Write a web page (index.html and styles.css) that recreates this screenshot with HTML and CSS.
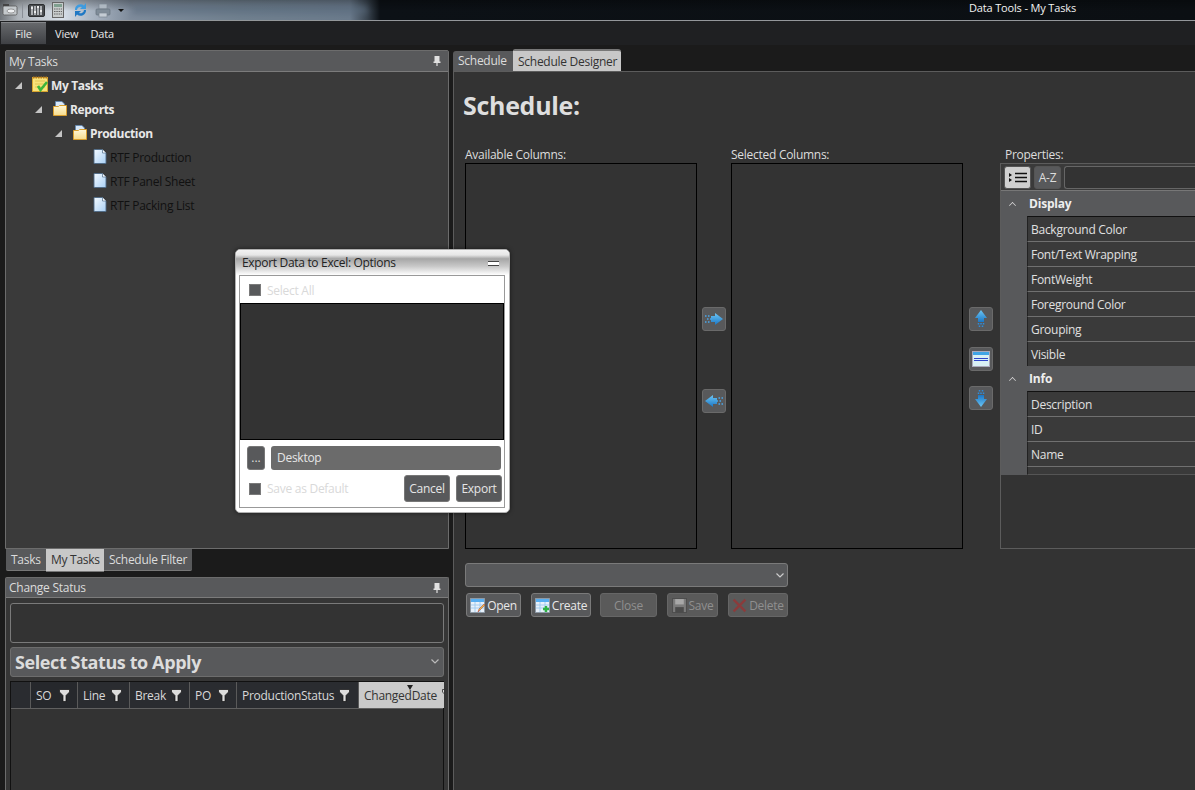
FILE: index.html
```html
<!DOCTYPE html>
<html lang="en">
<head>
<meta charset="utf-8">
<title>Data Tools - My Tasks</title>
<link rel="stylesheet" href="styles.css">
</head>
<body>
<svg class="defs" width="0" height="0" aria-hidden="true">
  <defs>
    <linearGradient id="blueArrow" x1="0" y1="0" x2="0" y2="1"><stop offset="0" stop-color="#6cc6f5"/><stop offset="1" stop-color="#1b76c4"/></linearGradient>
    <linearGradient id="folder" x1="0" y1="0" x2="0" y2="1"><stop offset="0" stop-color="#fff8d8"/><stop offset="1" stop-color="#f6dc8c"/></linearGradient>
    <linearGradient id="doc" x1="0" y1="0" x2="1" y2="1"><stop offset="0" stop-color="#f4faff"/><stop offset="1" stop-color="#a9d0f5"/></linearGradient>
    <symbol id="i-folder" viewBox="0 0 14 15">
      <path d="M2.500 .5h6.500l2.500 2.500v5h-9z" fill="#d9e8f8" stroke="#5f86b3" stroke-width=".8"/>
      <path d="M.5 5.500h5l1-1h7v10h-13z" fill="url(#folder)" stroke="#d99f2e" stroke-width="1"/>
    </symbol>
    <symbol id="i-doc" viewBox="0 0 14 15">
      <path d="M1 .5h8.500l3.500 3.500v10.500H1z" fill="url(#doc)" stroke="#4e6a86" stroke-width=".9"/>
      <path d="M9.500.5v3.500H13" fill="#fff" stroke="#4e6a86" stroke-width=".7"/>
    </symbol>
    <symbol id="i-filter" viewBox="0 0 11 13">
      <path d="M.5 .5h10v2.500L7 6.500v6H4v-6L.5 3z" fill="#ddd" stroke="#111" stroke-width=".7"/>
    </symbol>
    <symbol id="i-pin" viewBox="0 0 8 10">
      <path d="M1.500 0h5v5.500h1V7H4.600v3H3.400V7H.5V5.500h1z" fill="#e0e0e0"/>
    </symbol>
    <symbol id="i-table" viewBox="0 0 15 15">
      <rect x=".5" y=".5" width="14" height="14" fill="#e8f1fa" stroke="#8a98a6" stroke-width=".8"/>
      <rect x="1" y="1" width="13" height="3" fill="#58aef0"/>
      <path d="M1 7h13M1 10h13M5 4v10M10 4v10" stroke="#9cc9ef" stroke-width=".9"/>
    </symbol>
    <symbol id="i-right" viewBox="0 0 20 14">
      <path d="M7 4h4V1l8 6-8 6v-3H7z" fill="url(#blueArrow)"/>
      <path d="M1 4h1.500M4 4h1.500M3 7h1.500M6 7h1.500M1 10h1.500M4 10h1.500" stroke="#4aa7ea" stroke-width="1.500"/>
    </symbol>
    <symbol id="i-up" viewBox="0 0 14 20">
      <path d="M7 1l6 8h-3v4H4V9H1z" fill="url(#blueArrow)"/>
      <path d="M4.500 14v1.500M7 14v1.500M9.500 14v1.500M5.500 16.500V18M8.500 16.500V18" stroke="#2e8ddb" stroke-width="1.500"/>
    </symbol>
  </defs>
</svg>

<div class="window">
  <header class="titlebar">
    <div class="quick">
      <svg class="qa qa-app" viewBox="0 0 16 14"><rect x="1" y="3" width="14" height="9" rx="1.500" fill="#c4c9cc" stroke="#555" stroke-width=".8"/><rect x="1" y="1" width="6" height="2" fill="#444"/><ellipse cx="9" cy="8" rx="4" ry="2" fill="#eef0f2" stroke="#777" stroke-width=".7"/></svg>
      <span class="qa-sep"></span>
      <svg class="qa qa-mix" viewBox="0 0 17 13"><rect x=".5" y=".5" width="16" height="12" rx="1.500" fill="#4a4d50" stroke="#2c2e30"/><path d="M4 2v9M7 2v9M10 2v9M13 2v9" stroke="#d8dade" stroke-width="1.400"/><path d="M3 4h2M6 8h2M9 3h2M12 7h2" stroke="#fff" stroke-width="1.600"/></svg>
      <svg class="qa qa-calc" viewBox="0 0 12 16"><rect x=".5" y=".5" width="11" height="15" fill="#c8cccc" stroke="#666"/><rect x="2" y="2" width="8" height="3" fill="#7f9f8f"/><path d="M2 7h8M2 9.500h8M2 12h8" stroke="#666" stroke-width="1.200" stroke-dasharray="1.500 .8"/></svg>
      <svg class="qa qa-sync" viewBox="0 0 15 16"><path d="M2 8a5.500 5.500 0 0 1 9-4.500L13 1v6H7l2-2A3.500 3.500 0 0 0 4 8z" fill="#3d9be0"/><path d="M13 8a5.500 5.500 0 0 1-9 4.500L2 15V9h6l-2 2a3.500 3.500 0 0 0 5-3z" fill="#1f78c4"/></svg>
      <svg class="qa qa-print" viewBox="0 0 16 15"><rect x="4" y="1" width="8" height="5" fill="#aeb8c2" stroke="#7b8692" stroke-width=".7"/><rect x="1" y="6" width="14" height="6" rx="1" fill="#7f8c98" stroke="#66717c" stroke-width=".7"/><rect x="4" y="10" width="8" height="4" fill="#c4ccd4" stroke="#7b8692" stroke-width=".7"/></svg>
      <span class="qa-more"></span>
    </div>
    <div class="smear"></div>
    <div class="app-title">Data Tools - My Tasks</div>
  </header>

  <nav class="menubar">
    <span class="menu-file">File</span>
    <span class="menu-item">View</span>
    <span class="menu-item">Data</span>
  </nav>

  <main class="workspace">
    <section class="left">
      <div class="panel tasks-panel">
        <div class="panel-head"><span>My Tasks</span><svg class="pin"><use href="#i-pin"/></svg></div>
        <div class="tree">
          <div class="tree-row"><span class="twist"></span><svg class="tree-notes" viewBox="0 0 16 16"><rect x=".5" y="1.500" width="15" height="14" fill="#f8e27a" stroke="#d9a52f"/><path d="M1 1.500h14" stroke="#b07a20" stroke-width="2" stroke-dasharray="1.500 1"/><path d="M3 5h10M3 8h10M3 11h10" stroke="#dcbc48" stroke-width=".8"/><path d="M6 10l2.500 4L15 6" fill="none" stroke="#3cb53a" stroke-width="2.600"/></svg><b>My Tasks</b></div>
          <div class="tree-row lvl1"><span class="twist"></span><svg class="tree-icon"><use href="#i-folder"/></svg><b>Reports</b></div>
          <div class="tree-row lvl2"><span class="twist"></span><svg class="tree-icon"><use href="#i-folder"/></svg><b>Production</b></div>
          <div class="tree-row lvl3"><svg class="tree-icon"><use href="#i-doc"/></svg><span class="leaf">RTF Production</span></div>
          <div class="tree-row lvl3"><svg class="tree-icon"><use href="#i-doc"/></svg><span class="leaf">RTF Panel Sheet</span></div>
          <div class="tree-row lvl3"><svg class="tree-icon"><use href="#i-doc"/></svg><span class="leaf">RTF Packing List</span></div>
        </div>
      </div>
      <div class="bottom-tabs">
        <span class="btab btab-tasks">Tasks</span>
        <span class="btab btab-on">My Tasks</span>
        <span class="btab btab-filter">Schedule Filter</span>
      </div>
      <div class="panel status-panel">
        <div class="panel-head"><span>Change Status</span><svg class="pin"><use href="#i-pin"/></svg></div>
        <div class="status-body">
          <div class="notes-box"></div>
          <div class="status-combo"><span>Select Status to Apply</span><svg class="chev" viewBox="0 0 8 5"><path d="M.5 .5L4 4l3.500-3.500" fill="none" stroke="#bbb" stroke-width="1.200"/></svg></div>
          <div class="grid-box">
            <div class="grid-head">
              <span class="col col-0"></span>
              <span class="col col-so">SO<svg class="filter"><use href="#i-filter"/></svg></span>
              <span class="col col-line">Line<svg class="filter"><use href="#i-filter"/></svg></span>
              <span class="col col-break">Break<svg class="filter"><use href="#i-filter"/></svg></span>
              <span class="col col-po">PO<svg class="filter"><use href="#i-filter"/></svg></span>
              <span class="col col-status">ProductionStatus<svg class="filter"><use href="#i-filter"/></svg></span>
              <span class="col col-date">ChangedDate<i class="sort-mark"></i><svg class="filter date-filter"><use href="#i-filter"/></svg></span>
            </div>
          </div>
        </div>
      </div>
    </section>

    <section class="right">
      <div class="top-tabs">
        <span class="ttab">Schedule</span>
        <span class="ttab ttab-on">Schedule Designer</span>
      </div>
      <div class="designer">
        <h1 class="heading">Schedule:</h1>
        <div class="columns">
          <div class="list-col">
            <label class="col-label">Available Columns:</label>
            <div class="listbox"></div>
          </div>
          <div class="move-col">
            <button class="icon-btn"><svg class="ico-h"><use href="#i-right"/></svg></button>
            <button class="icon-btn"><svg class="ico-h flip-h"><use href="#i-right"/></svg></button>
          </div>
          <div class="list-col">
            <label class="col-label">Selected Columns:</label>
            <div class="listbox"></div>
          </div>
          <div class="order-col">
            <button class="icon-btn"><svg class="ico-v"><use href="#i-up"/></svg></button>
            <button class="icon-btn"><svg class="ico-grid" viewBox="0 0 18 16"><rect x=".5" y=".5" width="17" height="15" fill="#d8f0f4" stroke="#aab"/><rect x="1" y="1" width="16" height="3" fill="#3fa5e6"/><path d="M2 7.500h14M2 9.500h14" stroke="#2d45c8" stroke-width="1.200"/></svg></button>
            <button class="icon-btn"><svg class="ico-v flip-v"><use href="#i-up"/></svg></button>
          </div>
          <div class="props-col">
            <label class="col-label">Properties:</label>
            <div class="props">
              <div class="props-bar">
                <span class="mode mode-on"><svg class="mode-ico" viewBox="0 0 18 11"><path d="M0 1l3 2-3 2zM0 6l3 2-3 2z" fill="#111"/><path d="M6 1.500h12M6 5.500h12M6 9.500h12" stroke="#111" stroke-width="1.300"/></svg></span>
                <span class="mode">A-Z</span>
                <span class="search"></span>
              </div>
              <div class="props-group"><i class="caret"></i><b>Display</b></div>
              <div class="props-rows">
                <div class="prop">Background Color</div>
                <div class="prop">Font/Text Wrapping</div>
                <div class="prop">FontWeight</div>
                <div class="prop">Foreground Color</div>
                <div class="prop">Grouping</div>
                <div class="prop">Visible</div>
              </div>
              <div class="props-group"><i class="caret"></i><b>Info</b></div>
              <div class="props-rows props-end">
                <div class="prop">Description</div>
                <div class="prop">ID</div>
                <div class="prop">Name</div>
                <div class="prop prop-cut"></div>
              </div>
            </div>
          </div>
        </div>
        <div class="schedule-combo"><svg class="chev" viewBox="0 0 8 5"><path d="M.5 .5L4 4l3.500-3.500" fill="none" stroke="#ccc" stroke-width="1.200"/></svg></div>
        <div class="actions">
          <button class="act act-open"><svg class="act-ico" viewBox="0 0 15 15"><use href="#i-table"/><path d="M8 14l1-3 5-5 1 1-5 5z" fill="#f0c040" stroke="#a33" stroke-width=".5"/></svg>Open</button>
          <button class="act act-create"><svg class="act-ico" viewBox="0 0 15 15"><use href="#i-table"/><path d="M11 8v6M8 11h6" stroke="#2fb344" stroke-width="2.400"/></svg>Create</button>
          <button class="act act-close off">Close</button>
          <button class="act act-save off"><svg class="act-ico" viewBox="0 0 14 14"><path d="M.5 .5h13v13H.5z" fill="#7c7c7c" stroke="#4e4e4e"/><rect x="3" y="1" width="8" height="5" fill="#a8a8a8"/><rect x="3" y="8.500" width="8" height="5" fill="#4b4b4b"/></svg>Save</button>
          <button class="act act-delete off"><svg class="act-ico" viewBox="0 0 14 14"><path d="M1.500 1.500l11 11M12.500 1.500l-11 11" stroke="#8a3c3c" stroke-width="2.200"/></svg>Delete</button>
        </div>
      </div>
    </section>
  </main>

  <div class="dialog">
    <div class="dialog-title"><span>Export Data to Excel: Options</span><i class="min"></i></div>
    <div class="dialog-body">
      <div class="check-row"><i class="check"></i><span>Select All</span></div>
      <div class="dialog-list"></div>
      <div class="path-row"><button class="dots">...</button><span class="path">Desktop</span></div>
      <div class="dialog-foot">
        <i class="check"></i><span class="save-default">Save as Default</span>
        <button class="dlg-btn btn-cancel">Cancel</button>
        <button class="dlg-btn">Export</button>
      </div>
    </div>
  </div>
</div>
</body>
</html>
```
FILE: styles.css
```css
* { box-sizing: border-box; }
html, body { margin: 0; padding: 0; height: 100%; overflow: hidden; }
body { background: #1b1b1b; font-family: "Open Sans", "Noto Sans", sans-serif; font-size: 12px; color: #ddd; letter-spacing: -.27px; }
.defs { position: absolute; }
.window { width: 1195px; height: 790px; position: relative; overflow: hidden; display: flex; flex-direction: column; }

.titlebar { height: 21px; flex: none; display: flex; align-items: center; border-bottom: 1px solid #94979b; background: linear-gradient(rgba(0,0,0,.3), rgba(0,0,0,0) 55%), linear-gradient(90deg, #6f7479 0, #aeb4ba 18px, #d8e0e9 62px, #aeb9c6 88px, #7f8c9c 130px, #71818f 240px, #6b7b8c 350px, #3a4550 367px, #0c1116 380px, #0b0f13 100%); position: relative; }
.quick { display: flex; align-items: center; height: 20px; flex: none; position: relative; z-index: 1; }
.qa { display: block; flex: none; }
.qa-app { width: 16px; height: 14px; margin-left: 2px; }
.qa-sep { width: 1px; height: 16px; background: #8a8f96; margin: 0 4px; }
.qa-mix { width: 17px; height: 13px; margin-left: 1px; }
.qa-calc { width: 12px; height: 16px; margin-left: 7px; }
.qa-sync { width: 15px; height: 16px; margin-left: 9px; }
.qa-print { width: 16px; height: 15px; margin-left: 7px; }
.qa-more { width: 0; height: 0; margin-left: 7px; border: 3px solid transparent; border-top: 3px solid #111; margin-top: 4px; }
.smear { width: 235px; height: 8px; margin-left: 8px; flex: none; background: #56677a; filter: blur(3px); opacity: .6; }
.app-title { margin-left: auto; margin-right: 119px; color: #f2f2f2; font-size: 11px; letter-spacing: -.15px; margin-top: -6px; }

.menubar { height: 24px; flex: none; background: #1f2022; display: flex; align-items: center; padding-left: 1px; font-size: 11px; letter-spacing: -.15px; }
.menu-file { width: 45px; height: 22px; text-align: center; line-height: 21px; background: linear-gradient(#66686b, #3f4145); border-top: 1px solid #85878a; color: #e6e6e6; margin-right: 8px; align-self: flex-end; margin-bottom: 1px; }
.menu-item { margin-right: 11px; margin-left: 1px; color: #e8e8e8; }

.workspace { flex: 1; min-height: 0; display: flex; padding-left: 5px; gap: 4px; }
.left { width: 444px; flex: none; padding-top: 5px; display: flex; flex-direction: column; }
.panel { border: 1px solid #6c6c6c; background: #3a3a3a; border-radius: 2px 2px 0 0; }
.panel-head { height: 21px; background: #58595b; border-bottom: 1px solid #7b7b7b; display: flex; align-items: center; justify-content: space-between; padding: 0 7px 0 3px; color: #dcdcdc; }
.pin { width: 8px; height: 10px; flex: none; }
.tasks-panel { height: 499px; flex: none; }
.tree { padding-top: 1px; }
.tree-row { height: 24px; display: flex; align-items: center; padding-left: 9px; color: #e8e8e8; }
.tree-row b { font-weight: 700; letter-spacing: -.35px; }
.lvl1 { padding-left: 29px; }
.lvl2 { padding-left: 49px; }
.lvl3 { padding-left: 87px; }
.twist { width: 0; height: 0; border-style: solid; border-width: 0 0 7px 7px; border-color: transparent transparent #c4c4c4 transparent; flex: none; margin-right: 10px; }
.tree-notes { width: 16px; height: 16px; flex: none; margin-right: 3px; margin-top: -2px; }
.tree-icon { width: 14px; height: 15px; flex: none; margin-right: 3px; margin-top: -2px; }
.leaf { color: #111; }
.lvl1 .twist, .lvl2 .twist { margin-right: 11px; }

.bottom-tabs { height: 23px; flex: none; display: flex; align-items: flex-start; white-space: nowrap; padding-left: 1px; }
.btab { height: 22px; line-height: 21px; padding: 0 5px; background: #58595b; color: #dcdcdc; border-bottom: 1px solid #777; }
.btab-tasks { width: 40px; border-radius: 0 0 0 2px; }
.btab-on { width: 58px; background: #c8c8c8; color: #333; height: 23px; }
.btab-filter { width: 88px; border-radius: 0 0 2px 0; }

.status-panel { margin-top: 5px; flex: 1; min-height: 0; border-bottom: 0; background: #363636; }
.status-panel .panel-head { height: 20px; }
.status-body { padding: 5px 4px 0; display: flex; flex-direction: column; }
.notes-box { height: 40px; border: 1px solid #7a7a7a; border-radius: 3px; background: #333; }
.status-combo { height: 30px; margin-top: 4px; background: #58595b; border: 1px solid #6d6d6d; border-radius: 3px; display: flex; align-items: center; justify-content: space-between; padding: 0 4px; font-size: 18px; font-weight: 700; color: #dcdcdc; letter-spacing: -.4px; }
.chev { width: 8px; height: 5px; flex: none; }
.status-combo .chev { margin-top: -2px; }
.grid-box { margin-top: 4px; height: 120px; background: #333; border: 1px solid #111; border-bottom: 0; }
.grid-head { height: 27px; display: flex; background: #2a2c30; border-bottom: 1px solid #606060; }
.col { height: 26px; display: flex; align-items: center; justify-content: space-between; padding: 0 7px 0 5px; border-right: 1px solid #5a5a5a; color: #d8d8d8; flex: none; }
.filter { width: 11px; height: 13px; flex: none; }
.col-0 { width: 20px; }
.col-so { width: 47px; background: #26282c; }
.col-line { width: 52px; }
.col-break { width: 60px; }
.col-po { width: 47px; }
.col-status { width: 122px; padding-right: 8px; }
.col-date { width: 85px; background: #cacaca; color: #333; border-right: 0; position: relative; padding-left: 5px; justify-content: flex-start; overflow: hidden; }
.sort-mark { position: absolute; left: 48px; top: 3px; width: 0; height: 0; border-left: 3px solid transparent; border-right: 3px solid transparent; border-top: 5px solid #222; }
.date-filter { position: absolute; left: 83px; top: 7px; }

.right { flex: 1; min-width: 0; padding-top: 4px; display: flex; flex-direction: column; }
.top-tabs { height: 22px; flex: none; display: flex; align-items: flex-end; }
.ttab { height: 20px; line-height: 19px; width: 60px; padding-left: 5px; background: #58595b; color: #dcdcdc; border-radius: 3px 0 0 0; }
.ttab-on { height: 22px; width: 108px; background: #c8c8c8; color: #333; border-radius: 2px 3px 0 0; border-top: 2px solid #777; line-height: 21px; }
.designer { flex: 1; min-height: 0; background: #333; border-top: 1px solid #5c5c5c; border-left: 1px solid #5c5c5c; padding-left: 11px; display: flex; flex-direction: column; }
.heading { margin: 17px 0 0 -2px; height: 33px; font-size: 25px; line-height: 32px; font-weight: 700; color: #dedede; letter-spacing: -.3px; flex: none; }
.columns { display: flex; margin-top: 26px; height: 401px; flex: none; }
.col-label { display: block; height: 15px; line-height: 14px; color: #ddd; white-space: nowrap; }
.list-col { width: 232px; flex: none; display: flex; flex-direction: column; }
.listbox { height: 386px; border: 1px solid #000; background: #333; }
.move-col { width: 34px; flex: none; padding: 159px 0 0 5px; display: flex; flex-direction: column; gap: 58px; }
.icon-btn { width: 24px; height: 24px; padding: 0; border: 1px solid #6a6a6a; border-radius: 3px; background: #58595b; display: flex; align-items: center; justify-content: center; }
.ico-h { width: 20px; height: 14px; }
.ico-v { width: 14px; height: 20px; }
.ico-grid { width: 18px; height: 16px; }
.flip-h { transform: scaleX(-1); }
.flip-v { transform: scaleY(-1); }
.order-col { width: 37px; flex: none; padding: 159px 0 0 6px; display: flex; flex-direction: column; gap: 16px; }
.order-col .icon-btn:last-child { margin-top: -1px; }
.props-col { width: 240px; flex: none; }
.props-col .col-label { padding-left: 5px; }
.props { height: 386px; border: 1px solid #5c5c5c; border-right: 0; background: #333; overflow: hidden; }
.props-bar { height: 27px; background: #3a3a3a; border-bottom: 1px solid #777; display: flex; align-items: center; gap: 3px; padding: 0 0 0 3px; }
.mode { width: 27px; height: 23px; border: 1px solid #555; border-radius: 3px; background: #58595b; color: #ddd; display: flex; align-items: center; justify-content: center; flex: none; }
.mode-on { background: #cfcfcf; }
.mode-ico { width: 18px; height: 11px; }
.search { flex: 1; height: 23px; border: 1px solid #666; border-right: 0; border-radius: 3px 0 0 3px; background: #333; }
.props-group { height: 25px; background: #58595b; display: flex; align-items: center; padding-left: 8px; color: #eee; }
.props-group b { font-weight: 700; margin-left: 20px; letter-spacing: -.2px; }
.caret { width: 7px; height: 7px; margin-right: -7px; flex: none; border-left: 1px solid #ddd; border-top: 1px solid #ddd; transform: rotate(45deg) scale(.7); margin-top: 3px; }
.props-rows { border-left: 26px solid #58595b; }
.prop { height: 25px; line-height: 25px; padding-left: 3px; background: #3a3a3a; border-bottom: 1px solid #707070; border-left: 1px solid #222; color: #e0e0e0; }
.props-rows .prop:first-child { height: 26px; border-top: 1px solid #111; }
.props-rows .prop:last-child { height: 24px; border-bottom: 0; }
.props-end .prop-cut.prop-cut { height: 8px; border-bottom: 1px solid #555; }
.schedule-combo { width: 323px; height: 24px; flex: none; margin-top: 14px; background: #58595b; border: 1px solid #7a7a7a; border-radius: 3px; display: flex; align-items: center; justify-content: flex-end; padding-right: 3px; }
.actions { display: flex; margin-top: 6px; padding-left: 1px; }
.act { height: 24px; padding: 0; border: 1px solid #7a7a7a; border-radius: 3px; background: #58595b; color: #e8e8e8; font: inherit; letter-spacing: inherit; display: flex; align-items: center; justify-content: center; gap: 2px; }
.act-ico { width: 15px; height: 15px; flex: none; }
.off { background: #5a5a5a; border-color: #666; color: #8f8f8f; }
.act-open { width: 55px; }
.act-create { width: 60px; margin-left: 10px; }
.act-close { width: 57px; margin-left: 9px; }
.act-save { width: 51px; margin-left: 10px; }
.act-delete { width: 60px; margin-left: 10px; }

.dialog { position: absolute; left: 235px; top: 249px; width: 275px; height: 264px; background: #fff; border: 1px solid #b0b0b0; border-radius: 5px; box-shadow: 0 0 4px rgba(0,0,0,.55); padding: 0 4px 4px 3px; display: flex; flex-direction: column; color: #333; }
.dialog-title { height: 25px; flex: none; margin: 0 -4px 0 -3px; padding: 5px 6px 0; background: linear-gradient(#f2f2f2 0, #e6e6e6 20%, #a6a6a6 35%, #c8c8c8 65%, #fff 100%); border-radius: 5px 5px 0 0; display: flex; justify-content: space-between; align-items: flex-start; color: #222; line-height: 15px; letter-spacing: -.32px; }
.min { width: 11px; height: 5px; background: #fff; border: 1px solid #444; border-width: 1px 0 1px; margin-top: 6px; margin-right: 4px; }
.dialog-body { flex: 1; min-height: 0; border: 1px solid #999; display: flex; flex-direction: column; }
.check-row { height: 27px; flex: none; display: flex; align-items: center; padding-left: 9px; color: #d9d9d9; }
.check { width: 12px; height: 12px; flex: none; background: #58595b; border: 1px solid #7a7a7a; display: block; }
.check-row span { margin: 2px 0 0 6px; }
.dialog-list { height: 137px; flex: none; background: #333; border: 1px solid #000; }
.path-row { display: flex; margin-top: 6px; padding-left: 7px; gap: 6px; flex: none; }
.dots { width: 18px; height: 24px; padding: 0; border: 1px solid #777; border-radius: 3px; background: #58595b; color: #ddd; font: inherit; line-height: 18px; }
.path { width: 230px; height: 24px; line-height: 23px; padding-left: 6px; border-radius: 3px; background: #6b6b6b; color: #e6e6e6; }
.dialog-foot { display: flex; align-items: center; margin-top: 5px; padding-left: 9px; flex: none; }
.save-default { margin-left: 6px; color: #d9d9d9; width: 137px; flex: none; }
.dlg-btn { width: 46px; height: 27px; padding: 0; border: 1px solid #777; border-radius: 3px; background: #58595b; color: #e6e6e6; font: inherit; letter-spacing: inherit; }
.btn-cancel { margin-right: 6px; }
```
